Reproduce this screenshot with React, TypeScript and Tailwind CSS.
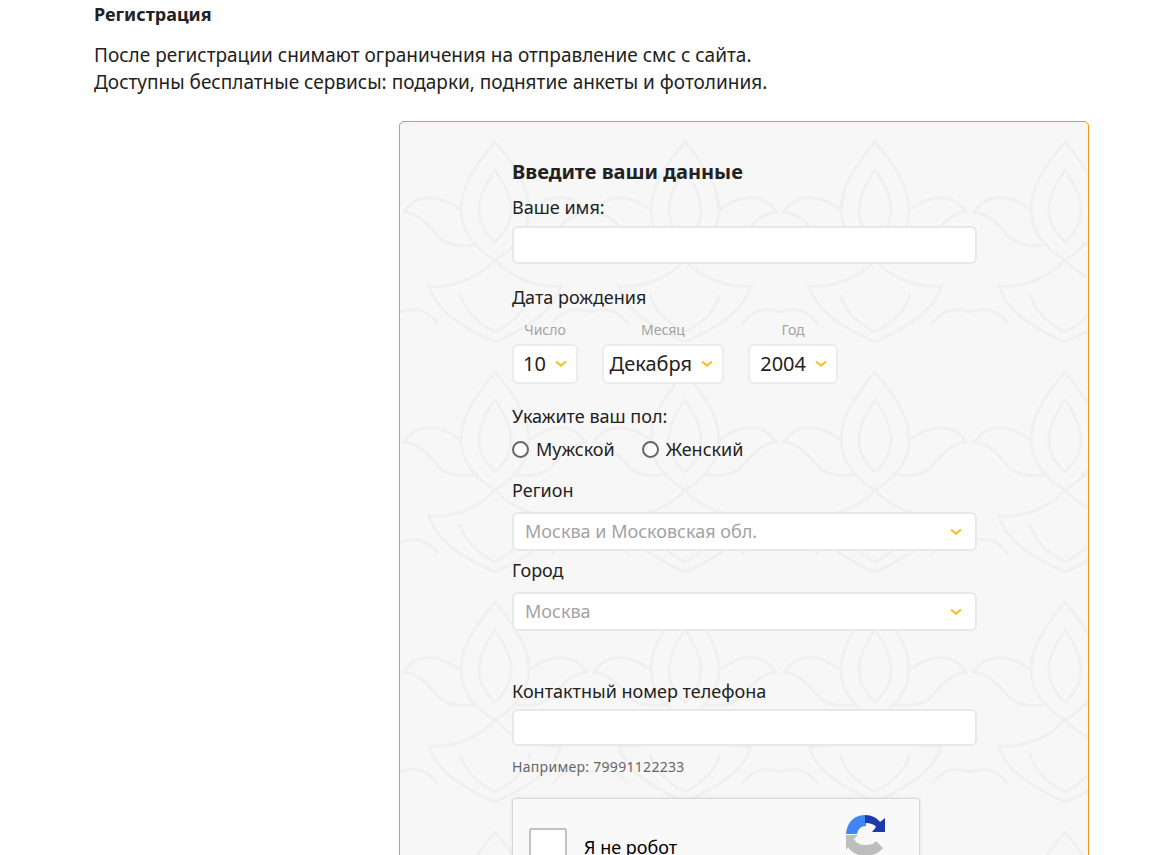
import React from 'react';

const FONT = "font-['Noto_Sans',sans-serif]";

function Chevron({ className = '' }: { className?: string }) {
  return (
    <svg width="12" height="8" viewBox="0 0 12 8" className={className} fill="none">
      <path d="M1 1.5 6 5.5 11 1.5" stroke="#fbbf24" strokeWidth="2.2" />
    </svg>
  );
}

// фоновый узор карточки
function Damask() {
  return (
    <svg className="absolute inset-0 w-full h-full" aria-hidden="true">
      <defs>
        <pattern id="damask" width="190" height="230" patternUnits="userSpaceOnUse">
          <g fill="none" stroke="#f0f0f0" strokeWidth="3">
            <path d="M95 20c-22 26-34 46-34 68s14 38 34 50c20-12 34-28 34-50s-12-42-34-68z" />
            <path d="M95 48c-10 14-16 26-16 40s7 24 16 32c9-8 16-18 16-32s-6-26-16-40z" />
            <path d="M61 88C36 70 16 72 4 90c18 2 26 16 36 26 12 10 30 8 38 6" />
            <path d="M129 88c25-18 45-16 57 2-18 2-26 16-36 26-12 10-30 8-38 6" />
            <path d="M95 138c-16 18-42 28-66 26 6 22 26 38 66 56 40-18 60-34 66-56-24 2-50-8-66-26z" />
            <path d="M0 190c16-6 28-2 38 12M190 190c-16-6-28-2-38 12M60 172c4 16 16 28 35 38M130 172c-4 16-16 28-35 38" />
          </g>
        </pattern>
      </defs>
      <rect width="100%" height="100%" fill="url(#damask)" />
    </svg>
  );
}

function DateSelect({ label, value, width }: { label: string; value: string; width: string }) {
  return (
    <div className={`flex flex-col items-center ${width}`}>
      <span className="h-[15px] text-[14px] leading-[15px] text-[#a3a3a3]">{label}</span>
      <div className="mt-[7px] w-full h-10 flex items-center justify-end gap-[9px] pr-[9px] bg-white border-2 border-[#ececec] rounded-[6px] text-[20px] text-[#222]">
        <span>{value}</span>
        <Chevron />
      </div>
    </div>
  );
}

function SelectField({ value }: { value: string }) {
  return (
    <div className="h-[39px] flex items-center justify-between pl-[11px] pr-[13px] bg-white border-2 border-[#e8e8e8] rounded-[6px] text-[18px] text-[#a3a3a3]">
      <span>{value}</span>
      <Chevron />
    </div>
  );
}

function Radio({ label }: { label: string }) {
  return (
    <label className="flex items-center gap-[7px]">
      <span className="w-[17px] h-[17px] rounded-full border-2 border-[#666] bg-white" />
      <span>{label}</span>
    </label>
  );
}

function RecaptchaLogo() {
  return (
    <svg width="42" height="42" viewBox="0 0 42 42" fill="none">
      <path d="M1 20C2 8 9 1 21 1v11c-5 0-8 3-9 8H1z" fill="#4285f4" />
      <path d="M20 1c7 0 12 3 15 7l5-4v14H27l4-5c-2-3-6-4-11-4V1z" fill="#1c3aa9" />
      <path d="M1 21h12l-4 4c2 4 6 6 12 6 4 0 7-1 10-4l7 7c-4 5-10 8-17 8C12 42 6 38 3 33l-2 3V21z" fill="#bdbdbd" />
    </svg>
  );
}

export default function App() {
  return (
    <div className={`h-screen overflow-hidden bg-white text-[18px] text-[#222] ${FONT}`}>
      <div className="pl-[94px] pt-[1px]">
        <h1 className="text-[18px] leading-[26px] font-bold">Регистрация</h1>
        <p className="mt-[15px] text-[19px] leading-[27px]">
          После регистрации снимают ограничения на отправление смс с сайта.
          <br />
          Доступны бесплатные сервисы: подарки, поднятие анкеты и фотолиния.
        </p>
      </div>

      <div className="relative ml-[399px] mt-[25px] w-[690px] h-[800px] bg-[#f7f7f7] border border-[#f7941d] rounded-[5px] overflow-hidden">
        <Damask />
        <div className="relative pl-[112px] pt-[36px] w-[577px]">
          <h2 className="text-[20px] leading-[28px] font-bold">Введите ваши данные</h2>
          <div className="mt-[7px] leading-[28px]">Ваше имя:</div>
          <div className="mt-[5px] h-[38px] bg-white border-2 border-[#e8e8e8] rounded-[6px]" />

          <div className="mt-[19px] leading-[28px]">Дата рождения</div>
          <div className="mt-[11px] flex">
            <DateSelect label="Число" value="10" width="w-[66px]" />
            <div className="ml-[24px]">
              <DateSelect label="Месяц" value="Декабря" width="w-[122px]" />
            </div>
            <div className="ml-[24px]">
              <DateSelect label="Год" value="2004" width="w-[90px]" />
            </div>
          </div>

          <div className="mt-[18px] leading-[28px]">Укажите ваш пол:</div>
          <div className="mt-[5px] h-[28px] flex items-center gap-[27px]">
            <Radio label="Мужской" />
            <Radio label="Женский" />
          </div>

          <div className="mt-[13px] leading-[28px]">Регион</div>
          <div className="mt-[8px]">
            <SelectField value="Москва и Московская обл." />
          </div>
          <div className="mt-[5px] leading-[28px]">Город</div>
          <div className="mt-[8px]">
            <SelectField value="Москва" />
          </div>

          <div className="mt-[46px] leading-[28px]">Контактный номер телефона</div>
          <div className="mt-[4px] h-[37px] bg-white border-2 border-[#e8e8e8] rounded-[6px]" />
          <div className="mt-[12px] text-[14px] leading-[18px] text-[#666] tracking-[0.3px]">Например: 79991122233</div>

          <div className="mt-[22px] w-[408px] h-[100px] flex items-start bg-[#f9f9f9] border border-[#d6d6d6] rounded-[3px] shadow-[0_0_4px_rgba(0,0,0,0.08)]">
            <span className="mt-[29px] ml-[16px] w-[38px] h-[38px] bg-white border-2 border-[#c1c1c1] rounded-[2px]" />
            <span className="mt-[34px] ml-[17px] text-[18px] leading-[28px] text-black">Я не робот</span>
            <span className="ml-auto mt-[15px] mr-[32px]">
              <RecaptchaLogo />
            </span>
          </div>
        </div>
      </div>
    </div>
  );
}
